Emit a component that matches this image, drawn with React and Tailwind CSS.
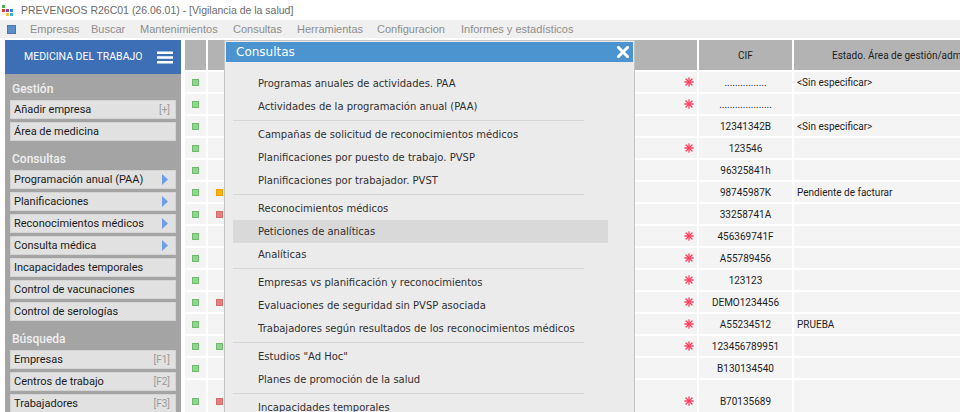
import React from "react";

const ui = "font-['Liberation_Sans',Arial,sans-serif]";
const side = "font-['Roboto',sans-serif]";
const verdana = "font-['DejaVu_Sans',sans-serif]";

// menu entries with the width each one takes in the bar
const menu = [
  ["Empresas", "w-[61px]"],
  ["Buscar", "w-[49px]"],
  ["Mantenimientos", "w-[93px]"],
  ["Consultas", "w-[64px]"],
  ["Herramientas", "w-[80px]"],
  ["Configuracion", "w-[84px]"],
  ["Informes y estadísticos", ""],
];

const sidebar = [
  {
    title: "Gestión",
    items: [
      { label: "Añadir empresa", key: "[+]" },
      { label: "Área de medicina" },
    ],
  },
  {
    title: "Consultas",
    items: [
      { label: "Programación anual (PAA)", sub: true },
      { label: "Planificaciones", sub: true },
      { label: "Reconocimientos médicos", sub: true },
      { label: "Consulta médica", sub: true },
      { label: "Incapacidades temporales" },
      { label: "Control de vacunaciones" },
      { label: "Control de serologías" },
    ],
  },
  {
    title: "Búsqueda",
    items: [
      { label: "Empresas", key: "[F1]" },
      { label: "Centros de trabajo", key: "[F2]" },
      { label: "Trabajadores", key: "[F3]" },
    ],
  },
];

const rows = [
  { flag: null, ast: true, cif: "................", estado: "<Sin especificar>" },
  { flag: null, ast: true, cif: "...................." },
  { flag: null, ast: false, cif: "12341342B", estado: "<Sin especificar>" },
  { flag: null, ast: true, cif: "123546" },
  { flag: null, ast: false, cif: "96325841h" },
  { flag: "orange", ast: false, cif: "98745987K", estado: "Pendiente de facturar" },
  { flag: "red", ast: false, cif: "33258741A" },
  { flag: null, ast: true, cif: "456369741F" },
  { flag: null, ast: true, cif: "A55789456" },
  { flag: null, ast: true, cif: "123123" },
  { flag: "red", ast: true, cif: "DEMO1234456" },
  { flag: null, ast: true, cif: "A55234512", estado: "PRUEBA" },
  { flag: "green", ast: true, cif: "123456789951" },
  { flag: null, ast: false, cif: "B130134540" },
  { flag: "red", ast: true, cif: "B70135689", tall: true },
];

const dialogGroups = [
  ["Programas anuales de actividades. PAA", "Actividades de la programación anual (PAA)"],
  [
    "Campañas de solicitud de reconocimientos médicos",
    "Planificaciones por puesto de trabajo. PVSP",
    "Planificaciones por trabajador. PVST",
  ],
  ["Reconocimientos médicos", "Peticiones de analíticas", "Analíticas"],
  [
    "Empresas vs planificación y reconocimientos",
    "Evaluaciones de seguridad sin PVSP asociada",
    "Trabajadores según resultados de los reconocimientos médicos",
  ],
  ['Estudios "Ad Hoc"', "Planes de promoción de la salud"],
  ["Incapacidades temporales"],
];

function AppIcon() {
  return (
    <svg width="14" height="14" viewBox="0 0 14 14">
      <rect x="1" y="2" width="3" height="3" fill="#4caf50" />
      <rect x="1" y="6" width="3" height="3" fill="#e53935" />
      <rect x="5" y="6" width="3" height="3" fill="#8e44ad" />
      <rect x="9" y="6" width="3" height="3" fill="#1e88e5" />
      <rect x="5" y="10" width="3" height="3" fill="#fbc02d" />
      <rect x="9" y="10" width="3" height="3" fill="#29b6f6" />
    </svg>
  );
}

function Asterisk() {
  return (
    <svg width="10" height="10" viewBox="0 0 10 10" stroke="#ff3d5e" strokeWidth="1.3" strokeLinecap="round">
      <line x1="5" y1="0.8" x2="5" y2="9.2" />
      <line x1="0.8" y1="5" x2="9.2" y2="5" />
      <line x1="2" y1="2" x2="8" y2="8" />
      <line x1="8" y1="2" x2="2" y2="8" />
    </svg>
  );
}

function Flag({ color }) {
  const cls = {
    green: "bg-[#8fd48f] border-[#6cbc6c]",
    orange: "bg-[#ffb30f] border-[#f29d00]",
    red: "bg-[#e88080] border-[#d86a6a]",
  }[color];
  return <span className={`block w-[7px] h-[7px] border ${cls}`} />;
}

function SideButton({ item }) {
  return (
    <div className="shrink-0 h-[19px] mb-[3px] bg-[#e1e1e1] border border-[#d4d4d4] flex items-center justify-between pl-[3px] pr-[5px]">
      <span className="text-[11px] text-[#1b1b1b] leading-none whitespace-nowrap">{item.label}</span>
      {item.key && <span className="text-[10px] text-[#9a9a9a] leading-none">{item.key}</span>}
      {item.sub && (
        <svg width="6" height="11" viewBox="0 0 6 11" className="mr-[2px]">
          <path d="M0 0 L6 5.5 L0 11 Z" fill="#6e9fe6" />
        </svg>
      )}
    </div>
  );
}

export default function App() {
  return (
    <div className={`w-[960px] h-[412px] overflow-hidden bg-white flex flex-col ${ui}`}>
      {/* window title */}
      <div className="shrink-0 h-[20px] flex items-center gap-[6px] pl-[1px]">
        <AppIcon />
        <span className="text-[10.5px] text-[#6a6a6a] leading-none">PREVENGOS R26C01 (26.06.01) - [Vigilancia de la salud]</span>
      </div>

      {/* menu bar */}
      <div className="shrink-0 h-[18px] bg-[#f0f0f0] flex items-center">
        <span className="ml-[7px] w-[9px] h-[9px] bg-[#5b8fc9] border border-[#4a78ad]" />
        <div className="flex items-center ml-[14px]">
          {menu.map(([m, w]) => (
            <span key={m} className={`${w} text-[11px] text-[#8e8e8e] leading-none whitespace-nowrap`}>{m}</span>
          ))}
        </div>
      </div>

      <div className="flex-1 flex pt-[2px] min-h-0">
        {/* side panel */}
        <aside className={`shrink-0 ml-[5px] w-[176px] bg-[#a4a4a4] flex flex-col ${side}`}>
          <div className="shrink-0 h-[34px] bg-[#3d6fb6] flex items-center justify-between pl-[19px] pr-[8px]">
            <span className="text-[10.5px] text-white">MEDICINA DEL TRABAJO</span>
            <svg width="16" height="13" viewBox="0 0 16 13" fill="white">
              <rect x="0" y="0.5" width="16" height="2.5" />
              <rect x="0" y="5.25" width="16" height="2.5" />
              <rect x="0" y="10" width="16" height="2.5" />
            </svg>
          </div>
          <div className="px-[5px] shrink-0">
            {sidebar.map((s) => (
              <div key={s.title}>
                <div className="h-[26px] pt-[7px] pl-[2px] text-[12px] leading-[16px] font-medium text-[#efefef]">{s.title}</div>
                {s.items.map((it) => (
                  <SideButton key={it.label} item={it} />
                ))}
              </div>
            ))}
          </div>
        </aside>

        {/* records grid */}
        <div className="ml-[4px] flex-1 relative overflow-hidden">
          <div className={`grid grid-cols-[21px_16px_471px_93px_220px] gap-[2px] bg-white text-[10px] text-[#1e1e1e] ${side}`}>
            <div className="h-[30px] bg-[#b3b3b3]" />
            <div className="h-[30px] bg-[#b3b3b3]" />
            <div className="h-[30px] bg-[#b3b3b3]" />
            <div className="h-[30px] bg-[#b3b3b3] flex items-center justify-center">CIF</div>
            <div className="h-[30px] bg-[#b3b3b3] flex items-center pl-[38px] whitespace-nowrap overflow-hidden">
              Estado. Área de gestión/administración
            </div>

            {rows.map((r, i) => {
              const h = r.tall ? "h-[42px]" : "h-[20px]";
              return (
                <React.Fragment key={i}>
                  <div className={`${h} bg-[#f4f4f4] flex items-center justify-center`}>
                    <Flag color="green" />
                  </div>
                  <div className={`${h} bg-[#f4f4f4] flex items-center pl-[8px]`}>
                    {r.flag && <Flag color={r.flag} />}
                  </div>
                  <div className={`${h} bg-[#f4f4f4] flex items-center justify-end pr-[3px]`}>
                    {r.ast && <Asterisk />}
                  </div>
                  <div className={`${h} bg-[#f4f4f4] flex items-center justify-center`}>{r.cif}</div>
                  <div className={`${h} bg-[#f4f4f4] flex items-center pl-[3px] whitespace-nowrap`}>{r.estado}</div>
                </React.Fragment>
              );
            })}
          </div>

          {/* Consultas dialog */}
          <div className={`absolute left-[39px] top-0 bottom-0 w-[411px] bg-[#ebebeb] border-x border-t border-[#c4c4c4] flex flex-col ${verdana}`}>
            <div className="shrink-0 h-[20px] mx-[1px] mt-[1px] bg-[#4b94cf] flex items-center justify-between pl-[10px] pr-[4px]">
              <span className="text-[12px] text-white leading-none">Consultas</span>
              <svg width="12" height="12" viewBox="0 0 12 12" stroke="white" strokeWidth="3" strokeLinecap="square">
                <line x1="1.5" y1="1.5" x2="10.5" y2="10.5" />
                <line x1="10.5" y1="1.5" x2="1.5" y2="10.5" />
              </svg>
            </div>
            <div className="shrink-0 pt-[10px] ml-[8px] mr-[26px]">
              {dialogGroups.map((g, gi) => (
                <div key={gi}>
                  {gi > 0 && <div className="my-[2px] mr-[24px] h-px bg-[#d6d6d6]" />}
                  {g.map((t) => (
                    <div
                      key={t}
                      className={`h-[23px] flex items-center pl-[25px] text-[10px] text-[#303030] whitespace-nowrap ${
                        t === "Peticiones de analíticas" ? "bg-[#d9d9d9]" : ""
                      }`}
                    >
                      {t}
                    </div>
                  ))}
                </div>
              ))}
            </div>
          </div>
        </div>
      </div>
    </div>
  );
}
